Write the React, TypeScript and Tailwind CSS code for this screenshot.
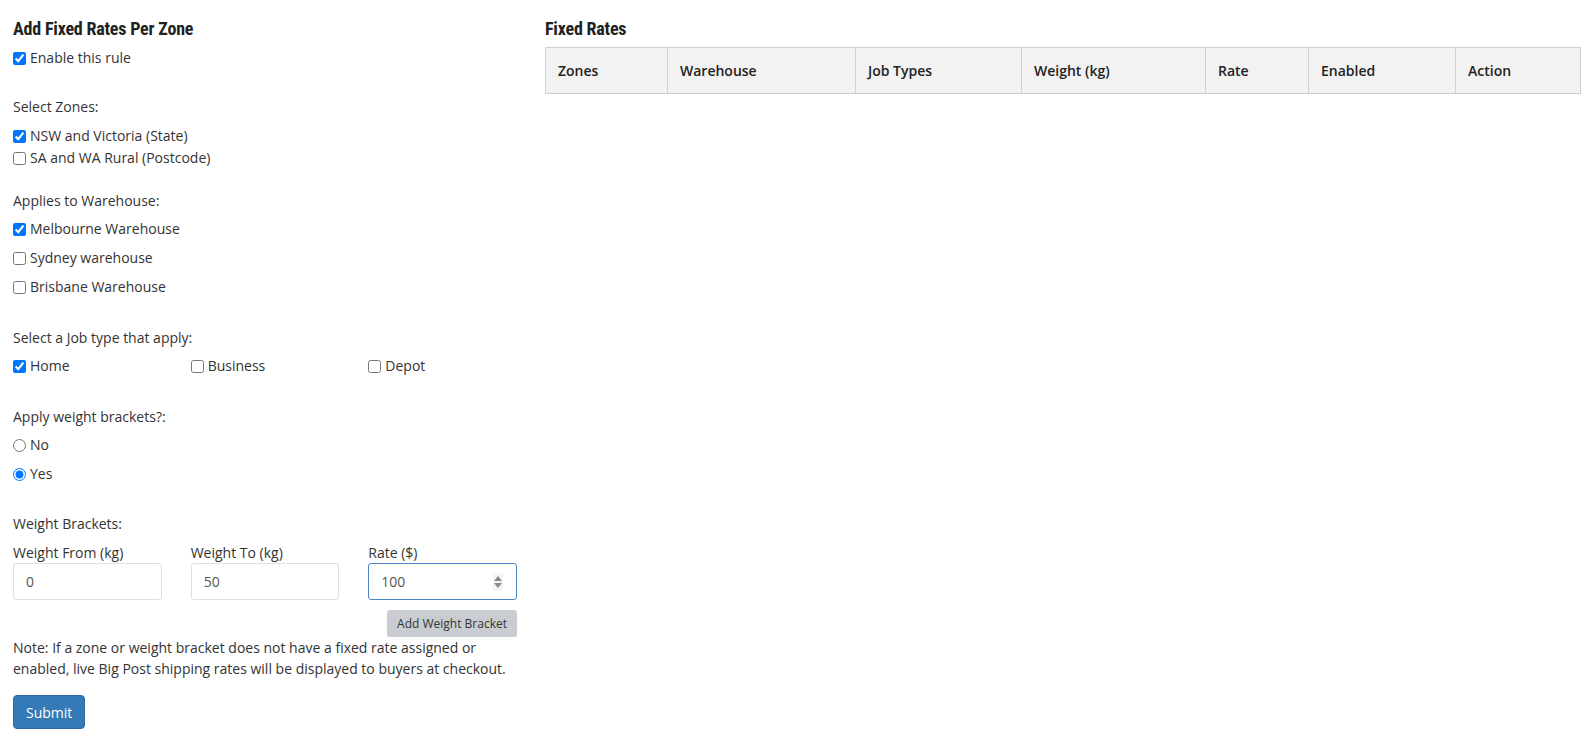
import React from 'react';

const zones = [
  { label: 'NSW and Victoria (State)', checked: true },
  { label: 'SA and WA Rural (Postcode)', checked: false },
];

const warehouses = [
  { label: 'Melbourne Warehouse', checked: true },
  { label: 'Sydney warehouse', checked: false },
  { label: 'Brisbane Warehouse', checked: false },
];

const jobTypes = [
  { label: 'Home', checked: true },
  { label: 'Business', checked: false },
  { label: 'Depot', checked: false },
];

const columns = [
  { label: 'Zones', w: 'w-[122px]' },
  { label: 'Warehouse', w: 'w-[188px]' },
  { label: 'Job Types', w: 'w-[166px]' },
  { label: 'Weight (kg)', w: 'w-[184px]' },
  { label: 'Rate', w: 'w-[103px]' },
  { label: 'Enabled', w: 'w-[147px]' },
  { label: 'Action', w: 'w-[125px]' },
];

const headingFont = { fontFamily: '"Roboto Condensed", "Liberation Sans Narrow", Roboto, sans-serif' };

function Check({ label, checked, type = 'checkbox', name }: { label: string; checked?: boolean; type?: string; name?: string }) {
  return (
    <label className="flex items-center h-5 leading-5">
      <input type={type} name={name} defaultChecked={checked} className="m-0 w-[13px] h-[13px]" />
      <span className="ml-[4px]">{label}</span>
    </label>
  );
}

function TextInput({ label, value, focused }: { label: string; value: string; focused?: boolean }) {
  return (
    <div className="flex flex-col">
      <span className="h-5 leading-5">{label}</span>
      <div
        className={
          focused
            ? 'relative h-[37px] rounded-[3px] border border-[#4f86c6] flex items-center pl-[12px] text-[#555]'
            : 'relative h-[37px] rounded-[3px] border border-[#e0e0e0] flex items-center pl-[12px] text-[#555]'
        }
      >
        {value}
        {focused && (
          <svg className="absolute right-[13px] top-[9px]" width="10" height="18" viewBox="0 0 10 18">
            <rect x="0" y="0" width="10" height="18" fill="#f4f4f4" />
            <path d="M5 3 L9 8 L1 8 Z" fill="#8a8a8a" />
            <path d="M1 10 L9 10 L5 15 Z" fill="#8a8a8a" />
          </svg>
        )}
      </div>
    </div>
  );
}

export default function App() {
  return (
    <div
      className="flex gap-[28px] pl-[13px] pr-[10px] pt-[19px] bg-white text-[14px] text-[#333] min-h-[742px]"
      style={{ fontFamily: '"Open Sans", sans-serif' }}
    >
      {/* Left: rule form */}
      <div className="w-[505px] flex flex-col">
        <h2 className="h-5 leading-5 text-[18px] font-bold text-[#222] tracking-[-0.2px]" style={headingFont}>
          Add Fixed Rates Per Zone
        </h2>
        <div className="mt-[9px]">
          <Check label="Enable this rule" checked />
        </div>

        <div className="mt-[29px] h-5 leading-5">Select Zones:</div>
        <div className="mt-[9px] flex flex-col gap-[2px]">
          {zones.map((z) => (
            <Check key={z.label} label={z.label} checked={z.checked} />
          ))}
        </div>

        <div className="mt-[23px] h-5 leading-5">Applies to Warehouse:</div>
        <div className="mt-[8px] flex flex-col gap-[9px]">
          {warehouses.map((w) => (
            <Check key={w.label} label={w.label} checked={w.checked} />
          ))}
        </div>

        <div className="mt-[31px] h-5 leading-5">Select a Job type that apply:</div>
        <div className="mt-[8px] grid grid-cols-3 gap-[29px]">
          {jobTypes.map((j) => (
            <Check key={j.label} label={j.label} checked={j.checked} />
          ))}
        </div>

        <div className="mt-[31px] h-5 leading-5">Apply weight brackets?:</div>
        <div className="mt-[8px] flex flex-col gap-[9px]">
          <Check type="radio" name="brackets" label="No" />
          <Check type="radio" name="brackets" label="Yes" checked />
        </div>

        <div className="mt-[30px] h-5 leading-5">Weight Brackets:</div>
        <div className="mt-[9px] grid grid-cols-3 gap-[29px]">
          <TextInput label="Weight From (kg)" value="0" />
          <TextInput label="Weight To (kg)" value="50" />
          <TextInput label="Rate ($)" value="100" focused />
        </div>
        <div className="mt-[10px] flex justify-end">
          <button className="h-[27px] px-[10px] rounded-[3px] bg-[#c9cdd1] text-[12px] text-[#333]">
            Add Weight Bracket
          </button>
        </div>

        <p className="mt-0 leading-[21px]">
          Note: If a zone or weight bracket does not have a fixed rate assigned or enabled, live Big Post shipping
          rates will be displayed to buyers at checkout.
        </p>

        <div className="mt-[16px]">
          <button className="h-[34px] px-[12px] rounded-[4px] bg-[#337ab7] border border-[#2e6da4] text-white">
            Submit
          </button>
        </div>
      </div>

      {/* Right: rates table */}
      <div className="flex-1 flex flex-col">
        <h2 className="h-5 leading-5 text-[18px] font-bold text-[#222] tracking-[-0.2px]" style={headingFont}>
          Fixed Rates
        </h2>
        <table className="mt-[8px] w-full table-fixed border-collapse border border-[#d0d0d0]">
          <thead>
            <tr className="bg-[#f2f2f2] h-[46px]">
              {columns.map((c) => (
                <th
                  key={c.label}
                  className={`${c.w} border border-[#d0d0d0] text-left font-semibold pl-[12px] text-[#222]`}
                >
                  {c.label}
                </th>
              ))}
            </tr>
          </thead>
        </table>
      </div>
    </div>
  );
}
